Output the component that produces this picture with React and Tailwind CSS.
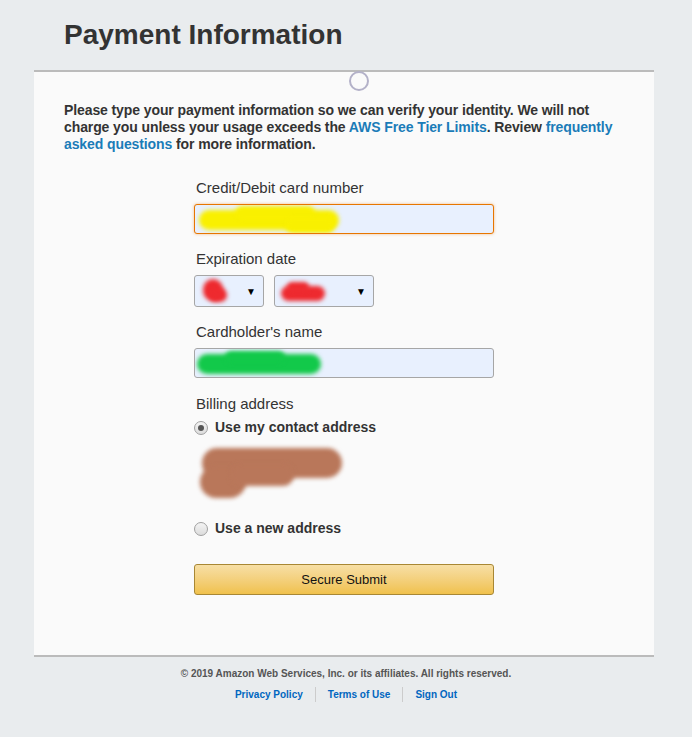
import React from 'react';

const Blob = ({ className }) => (
  <div className={`absolute rounded-full blur-[2px] ${className}`}></div>
);

const Field = ({ children, className = '' }) => (
  <div className={`relative h-[30px] w-[300px] rounded-[3px] border bg-[#e8f0fe] overflow-hidden ${className}`}>
    {children}
  </div>
);

const Select = ({ width, children }) => (
  <div className={`relative flex h-[32px] ${width} items-center justify-end rounded-[3px] border border-[#a6a6a6] bg-[#e8f0fe] pr-[7px] overflow-hidden`}>
    {children}
    <span className="text-[10px] text-black">▼</span>
  </div>
);

const Radio = ({ checked }) => (
  <span className="flex h-[14px] w-[14px] items-center justify-center rounded-full border border-[#a0a0a0] bg-gradient-to-b from-[#f4f4f4] to-[#dcdcdc]">
    {checked && <span className="h-[6px] w-[6px] rounded-full bg-[#555]"></span>}
  </span>
);

export default function App() {
  return (
    <div className="min-h-[737px] bg-[#e9ecee] text-[#333]" style={{ fontFamily: '"Liberation Sans", Arial, sans-serif' }}>
      <div className="px-[64px] pt-[18px] pb-[18px]">
        <h1 className="text-[28px] font-bold leading-[34px] text-[#333]">Payment Information</h1>
      </div>

      <div className="relative ml-[34px] mr-[38px] border-t-2 border-b-2 border-[#bbb] bg-[#fafafa] px-[30px] pt-[30px] pb-[60px]">
        <div className="absolute left-[315px] top-[-1px] h-[20px] w-[20px] rounded-full border-2 border-[#b3b1c8]"></div>

        <p className="text-[14px] font-bold leading-[17px] tracking-[-0.1px] text-[#333]">
          Please type your payment information so we can verify your identity. We will not charge you unless your usage exceeds the{' '}
          <a className="text-[#1a7cb8]">AWS Free Tier Limits</a>. Review{' '}
          <a className="text-[#1a7cb8]">frequently asked questions</a> for more information.
        </p>

        <div className="ml-[130px] mt-[26px] flex w-[300px] flex-col">
          <label className="pl-[2px] text-[15px] leading-[18px]">Credit/Debit card number</label>
          <Field className="mt-[7px] border-[#e77600] shadow-[0_0_3px_rgba(228,121,17,0.5)]">
            <Blob className="left-[4px] top-[5px] h-[20px] w-[140px] bg-[#f9f000]" />
            <Blob className="left-[40px] top-[1px] h-[14px] w-[80px] bg-[#f9f000]" />
            <Blob className="left-[90px] top-[12px] h-[16px] w-[50px] bg-[#f9f000]" />
          </Field>

          <label className="mt-[16px] pl-[2px] text-[15px] leading-[18px]">Expiration date</label>
          <div className="mt-[7px] flex gap-[10px]">
            <Select width="w-[70px]">
              <Blob className="left-[8px] top-[3px] h-[22px] w-[20px] bg-[#ee2a2f]" />
              <Blob className="left-[14px] top-[12px] h-[14px] w-[18px] bg-[#ee2a2f]" />
            </Select>
            <Select width="w-[100px]">
              <Blob className="left-[6px] top-[10px] h-[15px] w-[44px] bg-[#ee2a2f]" />
              <Blob className="left-[12px] top-[6px] h-[10px] w-[22px] bg-[#ee2a2f]" />
            </Select>
          </div>

          <label className="mt-[16px] pl-[2px] text-[15px] leading-[18px]">Cardholder's name</label>
          <Field className="mt-[7px] border-[#a6a6a6]">
            <Blob className="left-[2px] top-[5px] h-[20px] w-[124px] bg-[#12c94a]" />
            <Blob className="left-[30px] top-[2px] h-[12px] w-[60px] bg-[#12c94a]" />
          </Field>

          <div className="mt-[17px] pl-[2px] text-[15px] leading-[18px]">Billing address</div>
          <div className="mt-[4px] flex items-center gap-[7px]">
            <Radio checked />
            <span className="text-[14px] font-bold">Use my contact address</span>
          </div>
          <div className="relative ml-[6px] mt-[8px] h-[56px] w-[145px]">
            <Blob className="left-[2px] top-[2px] h-[30px] w-[140px] bg-[#b9775a]" />
            <Blob className="left-[0px] top-[20px] h-[32px] w-[46px] bg-[#b9775a]" />
            <Blob className="left-[30px] top-[18px] h-[22px] w-[64px] bg-[#b9775a]" />
          </div>
          <div className="mt-[16px] flex items-center gap-[7px]">
            <Radio />
            <span className="text-[14px] font-bold">Use a new address</span>
          </div>

          <button className="mt-[25px] h-[31px] w-[300px] rounded-[3px] border border-[#a88734] bg-gradient-to-b from-[#f7dfa5] to-[#f0c14b] text-[13px] text-[#111]">
            Secure Submit
          </button>
        </div>
      </div>

      <div className="pt-[9px] text-center text-[10px]">
        <p className="font-bold text-[#555]">© 2019 Amazon Web Services, Inc. or its affiliates. All rights reserved.</p>
        <div className="mt-[6px] flex justify-center">
          <a className="border-r border-[#ccc] px-[12px] font-bold text-[#0066c0]">Privacy Policy</a>
          <a className="border-r border-[#ccc] px-[12px] font-bold text-[#0066c0]">Terms of Use</a>
          <a className="px-[12px] font-bold text-[#0066c0]">Sign Out</a>
        </div>
      </div>
    </div>
  );
}
